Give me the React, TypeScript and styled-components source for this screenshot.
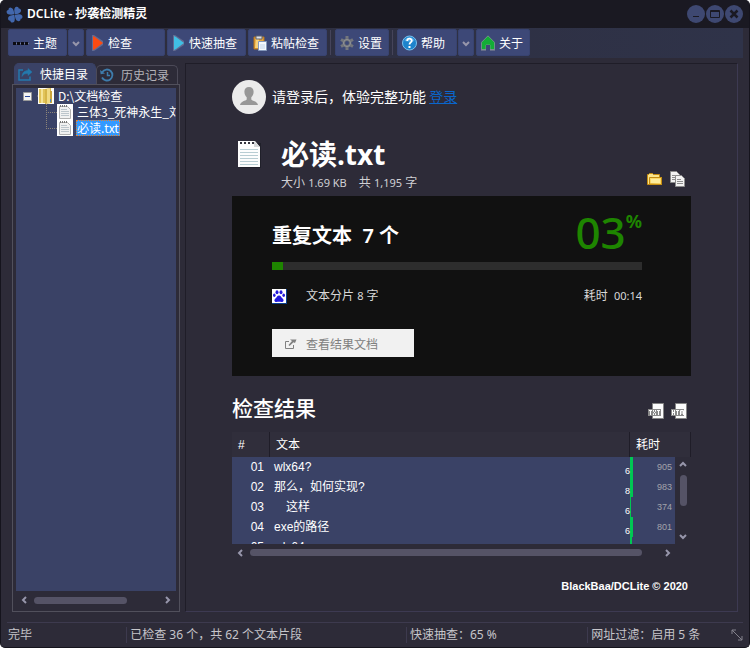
import React from "react";
import styled, { createGlobalStyle, css } from "styled-components";

const sans = `"Noto Sans", "Noto Sans CJK SC", sans-serif`;
const cjk = `"Noto Sans CJK SC", "Noto Sans", sans-serif`;
const arial = `"Liberation Sans", "Noto Sans CJK SC", sans-serif`;

const Global = createGlobalStyle`
  *, *::before, *::after { box-sizing: border-box; }
  body { margin: 0; background: #fff; }
  button { font: inherit; color: inherit; border: 0; padding: 0; margin: 0; background: none; cursor: pointer; }
  svg { display: block; flex: none; }
  h1, h2, h3, p, ul { margin: 0; padding: 0; }
`;

const Window = styled.div`
  display: flex;
  flex-direction: column;
  min-height: 100vh;
  overflow: hidden;
  background: #2d2b38;
  border: 1px solid #15141d;
  border-top: 0;
  border-radius: 5px;
  color: #fff;
  font: 12px/16px ${sans};
`;

const TitleBar = styled.header`
  display: flex;
  align-items: center;
  gap: 4px;
  height: 28px;
  padding: 0 6px 0 5px;
  background: #1a1922;
`;

const WindowTitle = styled.h1`
  flex: 1;
  font: 600 12px/16px ${sans};
`;

const WindowButtons = styled.div`
  display: flex;
  gap: 1px;
`;

const RoundButton = styled.button`
  display: flex;
  width: 18px;
  height: 18px;
  border-radius: 50%;
  background: #3e4871;
`;

const Toolbar = styled.nav`
  display: flex;
  align-items: center;
  gap: 2px;
  height: 30px;
  margin: 0 6px;
  padding: 1px 0 2px 1px;
  background: linear-gradient(90deg, #2d2c3b, #2f3349);
`;

const ToolButton = styled.button<{ $width: number }>`
  display: flex;
  align-items: center;
  gap: 4px;
  width: ${(p) => p.$width}px;
  height: 27px;
  padding-left: 4px;
  border: 1px solid #384370;
  border-radius: 2px;
  background: #3d4877;
  font-family: ${cjk};
  white-space: nowrap;
`;

const SplitGroup = styled.div`
  display: flex;
  gap: 1px;
`;

const SplitArrow = styled(ToolButton)`
  justify-content: center;
  padding: 0;
`;

const ToolSeparator = styled.i`
  width: 1px;
  height: 25px;
  margin: 0 2px 0 1px;
  background: #45445a;
`;

const Main = styled.main`
  display: flex;
  flex: 1;
  gap: 5px;
  padding: 5px 11px 10px;
`;

const Sidebar = styled.aside`
  display: flex;
  flex: none;
  flex-direction: column;
  width: 168px;
`;

const Tabs = styled.div`
  display: flex;
  align-items: flex-end;
  height: 21px;
  padding: 0 2px;
`;

const Tab = styled.button<{ $active?: boolean }>`
  display: flex;
  flex: 1;
  align-items: center;
  gap: 7px;
  height: ${(p) => (p.$active ? 21 : 19)}px;
  padding-left: 3px;
  border: 1px solid #4c4a58;
  border-bottom: 0;
  border-radius: 5px 5px 0 0;
  font-family: ${cjk};
  white-space: nowrap;
  ${(p) =>
    p.$active
      ? css`
          border-color: #3a4266;
          background: #3a4266;
        `
      : css`
          color: #b4b3b9;
        `}
`;

const TreePanel = styled.div`
  display: flex;
  flex: 1;
  flex-direction: column;
  padding: 3px 3px 0;
  border: 1px solid #51505c;
`;

const Tree = styled.ul`
  flex: 1;
  list-style: none;
  overflow: hidden;
  background: #3a4266;
  font-family: ${cjk};
`;

const TreeItem = styled.li<{ $child?: boolean }>`
  display: flex;
  align-items: center;
  height: 16px;
  padding-left: ${(p) => (p.$child ? 30 : 7)}px;
  white-space: nowrap;
`;

const TreeToggle = styled.button`
  margin-right: 5px;
`;

const TreeLabel = styled.span<{ $selected?: boolean }>`
  margin-left: 3px;
  padding: 0 1px;
  line-height: 16px;
  ${(p) =>
    p.$selected &&
    css`
      background: #3399ff;
      outline: 1px dotted #e08030;
      outline-offset: -1px;
    `}
`;

const HScroll = styled.div`
  display: flex;
  align-items: center;
  gap: 5px;
  height: 17px;
  padding: 0 20px 0 5px;
`;

const SideScroll = styled(HScroll)`
  height: 20px;
  padding: 0 5px 2px;
`;

const Track = styled.div`
  flex: 1;
`;

const Thumb = styled.div<{ $length: number }>`
  width: ${(p) => p.$length}%;
  height: 7px;
  border-radius: 4px;
  background: #555366;
`;

const Content = styled.section`
  flex: 1;
  min-width: 0;
  padding: 16px 46px 0;
  border: 1px solid #3d3a52;
  border-top-color: #1f1d28;
  border-left-color: #1f1d28;
`;

const LoginRow = styled.div`
  display: flex;
  align-items: center;
  gap: 6px;
  font: 14px/20px ${cjk};
`;

const LoginText = styled.span`
  padding-bottom: 2px;
`;

const LoginLink = styled.a`
  color: #0a66cc;
`;

const FileHeader = styled.div`
  display: flex;
  align-items: flex-end;
  height: 82px;
  padding: 0 6px 5px 6px;
`;

const FileIconBox = styled.div`
  align-self: flex-start;
  padding-top: 26px;
`;

const FileText = styled.div`
  flex: 1;
  padding-left: 20px;
`;

const FileName = styled.h2`
  font: 700 28px/42px ${sans};
`;

const FileMeta = styled.p`
  display: flex;
  gap: 12px;
  color: #d0d0d4;
`;

const Num = styled.span`
  font-size: 11px;
`;

const IconActions = styled.div`
  display: flex;
  align-items: center;
  gap: 8px;
`;

const FileActions = styled(IconActions)`
  padding-bottom: 4px;
`;

const Card = styled.section`
  height: 180px;
  padding: 16px 49px 19px 40px;
  background: #111;
`;

const CardTop = styled.div`
  display: flex;
  justify-content: space-between;
  height: 50px;
`;

const CardTitle = styled.h3`
  padding-top: 9px;
  font: 600 20px/30px "Noto Sans", "Noto Sans CJK SC", sans-serif;
`;

const Percent = styled.div`
  display: flex;
  color: #1e8500;
  font: 500 44px/40px ${sans};
`;

const PercentSign = styled.span`
  font: 700 18px/18px ${sans};
`;

const Bar = styled.div`
  height: 8px;
  background: #2d2d2d;
`;

const BarFill = styled.div`
  height: 8px;
  background: #1e8500;
`;

const StatsRow = styled.div`
  display: flex;
  align-items: center;
  height: 16px;
  margin-top: 18px;
  color: #d8d8d8;
`;

const StatsLabel = styled.span`
  flex: 1;
  padding-left: 19px;
`;

const ResultButton = styled.button`
  display: flex;
  align-items: center;
  gap: 9px;
  width: 142px;
  height: 28px;
  margin-top: 25px;
  padding: 1px 0 0 13px;
  background: #f1f1f1;
  color: #808080;
  font: 12px/16px ${cjk};
`;

const ResultsHead = styled.div`
  display: flex;
  align-items: flex-start;
  justify-content: space-between;
  height: 56px;
  padding: 15px 4px 0 0;
`;

const ResultsTitle = styled.h2`
  font: 500 21px/32px ${cjk};
`;

const ExportActions = styled(IconActions)`
  gap: 7px;
  padding-top: 12px;
`;

const GridBox = styled.div`
  position: relative;
  height: 112px;
  overflow: hidden;
`;

const Grid = styled.table`
  width: 100%;
  table-layout: fixed;
  border-collapse: separate;
  border-spacing: 0;
  font: 12px/20px ${arial};
`;

const Th = styled.th<{ $width?: number }>`
  width: ${(p) => (p.$width ? `${p.$width}px` : "auto")};
  height: 25px;
  padding: 1px 0 0 6px;
  border-right: 1px solid #1f1d28;
  background: #302e3b;
  font-weight: 400;
  text-align: left;
`;

const Td = styled.td`
  height: 20px;
  padding: 0 0 0 4px;
  background: #3a4266;
  line-height: 20px;
  white-space: pre;
`;

const IndexTd = styled(Td)`
  padding: 0 6px 0 0;
  text-align: right;
`;

const TextLine = styled.div`
  display: flex;
  align-items: center;
  justify-content: space-between;
  height: 20px;
`;

const Count = styled.span`
  padding-top: 9px;
  font-size: 9px;
  line-height: 11px;
`;

const TimeTd = styled(Td)<{ $bar: number }>`
  padding-right: 19px;
  border-left: ${(p) => p.$bar}px solid #00c853;
  color: #a3a3aa;
  font-size: 9px;
  text-align: right;
`;

const VScroll = styled.div`
  position: absolute;
  top: 25px;
  right: 0;
  bottom: 0;
  display: flex;
  flex-direction: column;
  align-items: center;
  gap: 6px;
  width: 16px;
  padding: 4px 0;
  background: #2d2b38;
`;

const VTrack = styled.div`
  flex: 1;
`;

const VThumb = styled.div`
  width: 7px;
  height: 31px;
  border-radius: 4px;
  background: #555366;
`;

const Copyright = styled.p`
  padding: 17px 3px 16px 0;
  font: 700 11px/16px ${arial};
  text-align: right;
`;

const StatusBar = styled.footer`
  display: flex;
  align-items: center;
  height: 25px;
  margin: 0 6px;
  border-top: 1px solid #3d3a4e;
  color: #c6c5ca;
`;

const StatusCell = styled.span<{ $grow: number }>`
  flex: ${(p) => p.$grow} 1 0;
  padding-left: 3px;
  border-left: 1px solid #3d3a4e;
  white-space: nowrap;
  &:first-child {
    padding-left: 0;
    border-left-color: transparent;
  }
`;

type Dir = "left" | "right" | "up" | "down";
const chevrons: Record<Dir, string> = {
  left: "M5 1 2 4l3 3",
  right: "M3 1l3 3-3 3",
  up: "M1 5l3-3 3 3",
  down: "M1 3l3 3 3-3",
};
const Chevron = ({ dir }: { dir: Dir }) => (
  <svg width="8" height="8" viewBox="0 0 8 8" fill="none" stroke="#9796ab" strokeWidth="2">
    <path d={chevrons[dir]} />
  </svg>
);

const Clover = () => (
  <svg width="17" height="17" viewBox="0 0 17 17" fill="#4267ad">
    <g transform="rotate(-8 8.500 8.500)">
      <path d="M8.300 8.300C5 8.600 1 7.800 1 5.200 1 3.600 2.200 3 3.200 3.200 3.200 1.800 4.400 .8 5.800 1.200 8.200 1.800 8.600 5 8.300 8.300z" />
      <path d="M8.800 8.300c-.3-3.300.1-7.300 2.700-7.300 1.600 0 2.200 1.200 2 2.200 1.400 0 2.400 1.200 2 2.600-.6 2.400-3.400 2.800-6.700 2.500z" />
      <path d="M8.800 8.900c3.300-.3 7.300.1 7.300 2.700 0 1.600-1.200 2.200-2.200 2 0 1.400-1.200 2.400-2.600 2-2.400-.6-2.800-3.400-2.500-6.700z" />
      <path d="M8.300 8.900c.3 3.300-.1 7.300-2.700 7.300-1.600 0-2.200-1.200-2-2.200-1.400 0-2.400-1.200-2-2.600.6-2.400 3.400-2.800 6.700-2.500z" />
    </g>
  </svg>
);

const Dots = () => (
  <svg width="16" height="6" viewBox="0 0 16 6" fill="#0c0c12">
    <path d="M0 2h3v3H0zM4 2h3v3H4zM8 2h3v3H8zM12 2h3v3h-3z" />
    <path d="M3 3.500h1M7 3.500h1M11 3.500h1M15 3.500h1" stroke="#777d99" />
  </svg>
);

const Play = ({ color }: { color: string }) => (
  <svg width="13" height="16" viewBox="0 0 13 16">
    <path d="M1 0v16h2l9-6V6L3 0z" fill="#626a90" />
    <path d="M2 1v14l2-1 8-6-8-6z" fill={color} />
  </svg>
);

const Paste = () => (
  <svg width="14" height="16" viewBox="0 0 14 16">
    <path d="M1 2h10v12H1z" fill="#e6a63c" stroke="#b8741c" />
    <path d="M3 3h3v10H2z" fill="#f8d27c" />
    <path d="M3 1h6v3H3z" fill="#dfe2e8" stroke="#60646e" />
    <path d="M5.500 6.500h8v9h-8z" fill="#f5f8fd" stroke="#8497ba" />
    <path d="M7 9h5v5H7z" fill="#dbe5f3" />
  </svg>
);

const Gear = () => (
  <svg width="14" height="14" viewBox="0 0 14 14">
    <g stroke="#74777d" strokeWidth="3">
      <path d="M7 0v14M1 3.500l12 7M1 10.500l12-7" />
    </g>
    <circle cx="7" cy="7" r="4.500" fill="#6c6f75" />
    <circle cx="7" cy="7" r="2" fill="#3d4877" />
    <circle cx="7" cy="7" r="3.500" fill="none" stroke="#92959a" />
  </svg>
);

const Help = () => (
  <svg width="15" height="16" viewBox="0 0 15 16">
    <circle cx="7.500" cy="8" r="7" fill="#1d83cc" stroke="#79c1ee" />
    <path d="M2.500 6a5.200 5 0 0 1 10 0c-3 1-7 1-10 0z" fill="#4ea7e4" />
    <path d="M5.200 6c0-3 4.600-3 4.600-.3C9.800 7.400 7.500 7.400 7.500 9.500" fill="none" stroke="#fff" strokeWidth="1.800" />
    <path d="M6.500 11h2v2h-2z" fill="#fff" />
  </svg>
);

const Home = () => (
  <svg width="14" height="16" viewBox="0 0 14 16">
    <path d="M7 .8 13.500 7.300v7.200H9V10H5v4.500H.5V7.300z" fill="#12ad36" stroke="#9aa5a8" strokeWidth=".6" />
    <path d="M0 15h5M9 15h5" stroke="#8b8f99" />
    <path d="M5 10h4v5H5z" fill="#3d4877" />
  </svg>
);

const Share = () => (
  <svg width="15" height="13" viewBox="0 0 15 13" fill="none" stroke="#2479ad">
    <path d="M5 2H1v10h11V8.500" strokeWidth="1.500" />
    <path d="M10 .5 14 4l-4 3.500v-2c-3 0-4.500.5-6 3 .2-4 2.500-6 6-6z" fill="#2479ad" strokeWidth=".5" />
  </svg>
);

const History = () => (
  <svg width="14" height="14" viewBox="0 0 14 14" fill="none" stroke="#3e7cab" strokeWidth="1.800">
    <path d="M2.300 4A5.500 5.500 0 1 1 2 9.500" />
    <path d="M0 2l.7 4.200L5 5.500z" fill="#3e7cab" stroke="none" />
    <path d="M7.500 4v3.500H10" strokeWidth="1.500" />
  </svg>
);

const FolderBook = () => (
  <svg width="16" height="16" viewBox="0 0 16 16">
    <path d="M0 0h16v16H0z" fill="#fbfbf6" />
    <path d="M1 1h7v14H1z" fill="#e2c45a" />
    <path d="M3 1h2v14H3z" fill="#f5e396" />
    <path d="M7 1l6-1v15l-6 1z" fill="#d6b548" />
    <path d="M9 1l3-.5V15H9z" fill="#f0da83" />
    <path d="M12 3h2v12h-2z" fill="#c9a43a" />
    <path d="M12 11h1v3h-1z" fill="#478cc7" />
  </svg>
);

const Note = () => (
  <svg width="16" height="16" viewBox="0 0 16 16">
    <path d="M0 0h16v16H0z" fill="#fff" />
    <path d="M2.500 2.500h8l3 3v9h-11z" fill="#f1f1f1" stroke="#b0b0b0" />
    <path d="M4 5.500h6M4 7.500h8M4 9.500h8M4 11.500h8" stroke="#bcc5cb" />
    <path d="M3.500 1v2M5.500 1v2M7.500 1v2M9.500 1v2" stroke="#777" />
  </svg>
);

const LargeNote = () => (
  <svg width="23" height="28" viewBox="0 0 23 28">
    <path d="M2 3h21v25H2z" fill="#20202a" />
    <path d="M0 1h17l5 6v20H0z" fill="#fdfdfd" />
    <path d="M16 1l6 6h-6z" fill="#d4d6d8" />
    <path d="M2 9.500h18M2 12.500h18M2 15.500h18M2 18.500h18M2 21.500h18M2 24.500h18" stroke="#b8cdd3" />
    <path d="M2 3h2M6 3h2M10 3h2M14 3h2" stroke="#34343e" strokeWidth="2" />
  </svg>
);

const Minus = () => (
  <svg width="9" height="9" viewBox="0 0 9 9">
    <path d="M.5.5h8v8h-8z" fill="#f4f4f4" stroke="#9a9a9a" />
    <path d="M2 4.500h5" stroke="#29479b" />
  </svg>
);

const BranchRoot = () => (
  <svg width="1" height="16" viewBox="0 0 1 16">
    <path d="M0 8h1" stroke="#8d8578" />
  </svg>
);

const Branch = ({ last }: { last?: boolean }) => (
  <svg width="11" height="16" viewBox="0 0 11 16" fill="none" stroke="#8d8578" strokeDasharray="1 1">
    <path d={last ? "M.5 0v8" : "M.5 0v16"} />
    <path d="M0 8.500h11" />
  </svg>
);

const Avatar = () => (
  <svg width="34" height="34" viewBox="0 0 34 34">
    <circle cx="17" cy="17" r="17" fill="#ebebeb" />
    <path d="M17 7c3 0 4.800 2.200 4.600 5-.1 2.500-1 4-2.300 5.200v2.300c1 1.500 6 1.500 6.700 5.500H8c.7-4 5.700-4 6.700-5.500v-2.300C13.400 16 12.500 14.500 12.400 12 12.200 9.200 14 7 17 7z" fill="#979797" />
  </svg>
);

const OpenFolder = () => (
  <svg width="15" height="12" viewBox="0 0 15 12">
    <path d="M.5 11.500V1.500h1l1-1h3l1 1h6v3h2v7z" fill="#fbe58b" stroke="#c38b10" />
    <path d="M2.500 11V4.500h12v7z" fill="#fbd966" stroke="#c38b10" />
    <path d="M4 6h9v4H4z" fill="#fdec9c" />
  </svg>
);

const Copy = () => (
  <svg width="15" height="16" viewBox="0 0 15 16" fill="#f2f2f2" stroke="#8c8c8c">
    <path d="M.5.500h6l3 3v8h-9z" />
    <path d="M2 4.500h4M2 6.500h4M2 8.500h4" />
    <path d="M5.500 4.500h6l3 3v8h-9z" />
    <path d="M7 8.500h4M7 10.500h6M7 12.500h6" />
  </svg>
);

const Paw = () => (
  <svg width="15" height="15" viewBox="0 0 15 15">
    <path d="M0 0h15v15H0z" fill="#0a3f8c" />
    <path d="M0 0h14v14H0z" fill="#fff" />
    <g fill="#2319dc">
      <ellipse cx="5" cy="3.300" rx="1.500" ry="2" />
      <ellipse cx="9" cy="3.300" rx="1.500" ry="2" />
      <ellipse cx="2.300" cy="6.300" rx="1.300" ry="1.700" />
      <ellipse cx="11.700" cy="6.300" rx="1.300" ry="1.700" />
      <path d="M7 6.500c1.800 0 2.200 1.800 3.300 2.700 2.500 2 1 4-.8 3.800-1.500-.2-3.500-.2-5 0-1.800.2-3.300-1.800-.8-3.800C4.800 8.300 5.200 6.500 7 6.500z" />
    </g>
  </svg>
);

const OpenExternal = () => (
  <svg width="12" height="10" viewBox="0 0 12 10" fill="none" stroke="#808080">
    <path d="M4 2.500H.5v7h8V6" />
    <path d="M5 .5h6.500L10 4 8.500 3.200 4.500 7 3.500 6 7 2z" fill="#808080" stroke="none" />
  </svg>
);

const glyphs: Record<string, string> = {
  TXT: "M1 7.500h3M2.500 7v5M5.500 7v1.500l2 2V12M7.500 7v1.500l-2 2V12M9 7.500h3M10.500 7v5",
  HTM: "M1.500 7v5M3.500 7v5M1 9.500h3M5 7.500h3M6.500 7v5M9.500 12V7.500h3V12M11 7v4",
};
const ExportIcon = ({ kind }: { kind: string }) => (
  <svg width="16" height="16" viewBox="0 0 16 16">
    <path d="M4.500.500h11v15h-11z" fill="#fcfcfc" stroke="#858585" />
    <path d="M0 6h13v7H0z" fill="#898989" />
    <path d={glyphs[kind]} fill="none" stroke="#fff" />
  </svg>
);

const Grip = () => (
  <svg width="12" height="12" viewBox="0 0 12 12" fill="none" stroke="#83828c">
    <path d="M1 5V1h4M1 1l10 10M7 11h4V7" />
  </svg>
);

const rows = [
  { id: "01", text: "wlx64?", count: 6, time: 905, bar: 3 },
  { id: "02", text: "那么，如何实现?", count: 8, time: 983, bar: 3 },
  { id: "03", text: "　这样", count: 6, time: 374, bar: 1 },
  { id: "04", text: "exe的路径", count: 6, time: 801, bar: 3 },
  { id: "05", text: "wlx64", count: 6, time: 677, bar: 2 },
];

export default function App() {
  const progress = 3;
  return (
    <Window>
      <Global />
      <TitleBar>
        <Clover />
        <WindowTitle>DCLite - 抄袭检测精灵</WindowTitle>
        <WindowButtons>
          <RoundButton aria-label="最小化">
            <svg width="18" height="18" stroke="#1a1922"><path d="M6 11.500h6" /></svg>
          </RoundButton>
          <RoundButton aria-label="最大化">
            <svg width="18" height="18" stroke="#1a1922" fill="none">
              <path d="M4.500 5.500h9v7h-9zM4 6.500h10" />
            </svg>
          </RoundButton>
          <RoundButton aria-label="关闭">
            <svg width="18" height="18" stroke="#1a1922" strokeWidth="2.500"><path d="M5.500 5.500l7 7M12.500 5.500l-7 7" /></svg>
          </RoundButton>
        </WindowButtons>
      </TitleBar>

      <Toolbar>
        <SplitGroup>
          <ToolButton $width={59}><Dots />主题</ToolButton>
          <SplitArrow $width={16} aria-label="主题菜单"><Chevron dir="down" /></SplitArrow>
        </SplitGroup>
        <ToolButton $width={79}><Play color="#fc4a12" />检查</ToolButton>
        <ToolButton $width={79}><Play color="#40bfe4" />快速抽查</ToolButton>
        <ToolButton $width={79}><Paste />粘帖检查</ToolButton>
        <ToolSeparator />
        <ToolButton $width={54}><Gear />设置</ToolButton>
        <ToolSeparator />
        <SplitGroup>
          <ToolButton $width={60}><Help />帮助</ToolButton>
          <SplitArrow $width={16} aria-label="帮助菜单"><Chevron dir="down" /></SplitArrow>
        </SplitGroup>
        <ToolButton $width={54}><Home />关于</ToolButton>
      </Toolbar>

      <Main>
        <Sidebar>
          <Tabs role="tablist">
            <Tab role="tab" aria-selected $active><Share />快捷目录</Tab>
            <Tab role="tab" aria-selected={false}><History />历史记录</Tab>
          </Tabs>
          <TreePanel>
            <Tree>
              <TreeItem>
                <TreeToggle aria-label="折叠"><Minus /></TreeToggle>
                <BranchRoot />
                <FolderBook />
                <TreeLabel>D:\文档检查</TreeLabel>
              </TreeItem>
              <TreeItem $child>
                <Branch />
                <Note />
                <TreeLabel>三体3_死神永生_刘</TreeLabel>
              </TreeItem>
              <TreeItem $child>
                <Branch last />
                <Note />
                <TreeLabel $selected>必读.txt</TreeLabel>
              </TreeItem>
            </Tree>
            <SideScroll>
              <Chevron dir="left" />
              <Track><Thumb $length={75} /></Track>
              <Chevron dir="right" />
            </SideScroll>
          </TreePanel>
        </Sidebar>

        <Content>
          <LoginRow>
            <Avatar />
            <LoginText>
              请登录后，体验完整功能 <LoginLink href="#login">登录</LoginLink>
            </LoginText>
          </LoginRow>

          <FileHeader>
            <FileIconBox><LargeNote /></FileIconBox>
            <FileText>
              <FileName>必读.txt</FileName>
              <FileMeta>
                <span>大小 <Num>1.69 KB</Num></span>
                <span>共 <Num>1,195</Num> 字</span>
              </FileMeta>
            </FileText>
            <FileActions>
              <button aria-label="打开文件夹"><OpenFolder /></button>
              <button aria-label="复制"><Copy /></button>
            </FileActions>
          </FileHeader>

          <Card>
            <CardTop>
              <CardTitle>重复文本&nbsp; 7 个</CardTitle>
              <Percent>03<PercentSign>%</PercentSign></Percent>
            </CardTop>
            <Bar role="progressbar" aria-valuenow={progress} aria-valuemin={0} aria-valuemax={100} aria-label="重复率">
              <BarFill style={{ width: `${progress}%` }} />
            </Bar>
            <StatsRow>
              <Paw />
              <StatsLabel>文本分片 <Num>8</Num> 字</StatsLabel>
              <span>耗时&nbsp; <Num>00:14</Num></span>
            </StatsRow>
            <ResultButton><OpenExternal />查看结果文档</ResultButton>
          </Card>

          <ResultsHead>
            <ResultsTitle>检查结果</ResultsTitle>
            <ExportActions>
              <button aria-label="导出 TXT"><ExportIcon kind="TXT" /></button>
              <button aria-label="导出 HTM"><ExportIcon kind="HTM" /></button>
            </ExportActions>
          </ResultsHead>
          <GridBox>
            <Grid>
              <thead>
                <tr><Th $width={38}>#</Th><Th>文本</Th><Th $width={61}>耗时</Th></tr>
              </thead>
              <tbody>
                {rows.map((r) => (
                  <tr key={r.id}>
                    <IndexTd>{r.id}</IndexTd>
                    <Td><TextLine>{r.text}<Count>{r.count}</Count></TextLine></Td>
                    <TimeTd $bar={r.bar}>{r.time}</TimeTd>
                  </tr>
                ))}
              </tbody>
            </Grid>
            <VScroll>
              <Chevron dir="up" />
              <VTrack><VThumb /></VTrack>
              <Chevron dir="down" />
            </VScroll>
          </GridBox>
          <HScroll>
            <Chevron dir="left" />
            <Track><Thumb $length={96} /></Track>
            <Chevron dir="right" />
          </HScroll>
          <Copyright>BlackBaa/DCLite © 2020</Copyright>
        </Content>
      </Main>

      <StatusBar>
        <StatusCell $grow={120}>完毕</StatusCell>
        <StatusCell $grow={280}>已检查 36 个，共 62 个文本片段</StatusCell>
        <StatusCell $grow={180}>快速抽查：65 %</StatusCell>
        <StatusCell $grow={142}>网址过滤：启用 5 条</StatusCell>
        <Grip />
      </StatusBar>
    </Window>
  );
}
